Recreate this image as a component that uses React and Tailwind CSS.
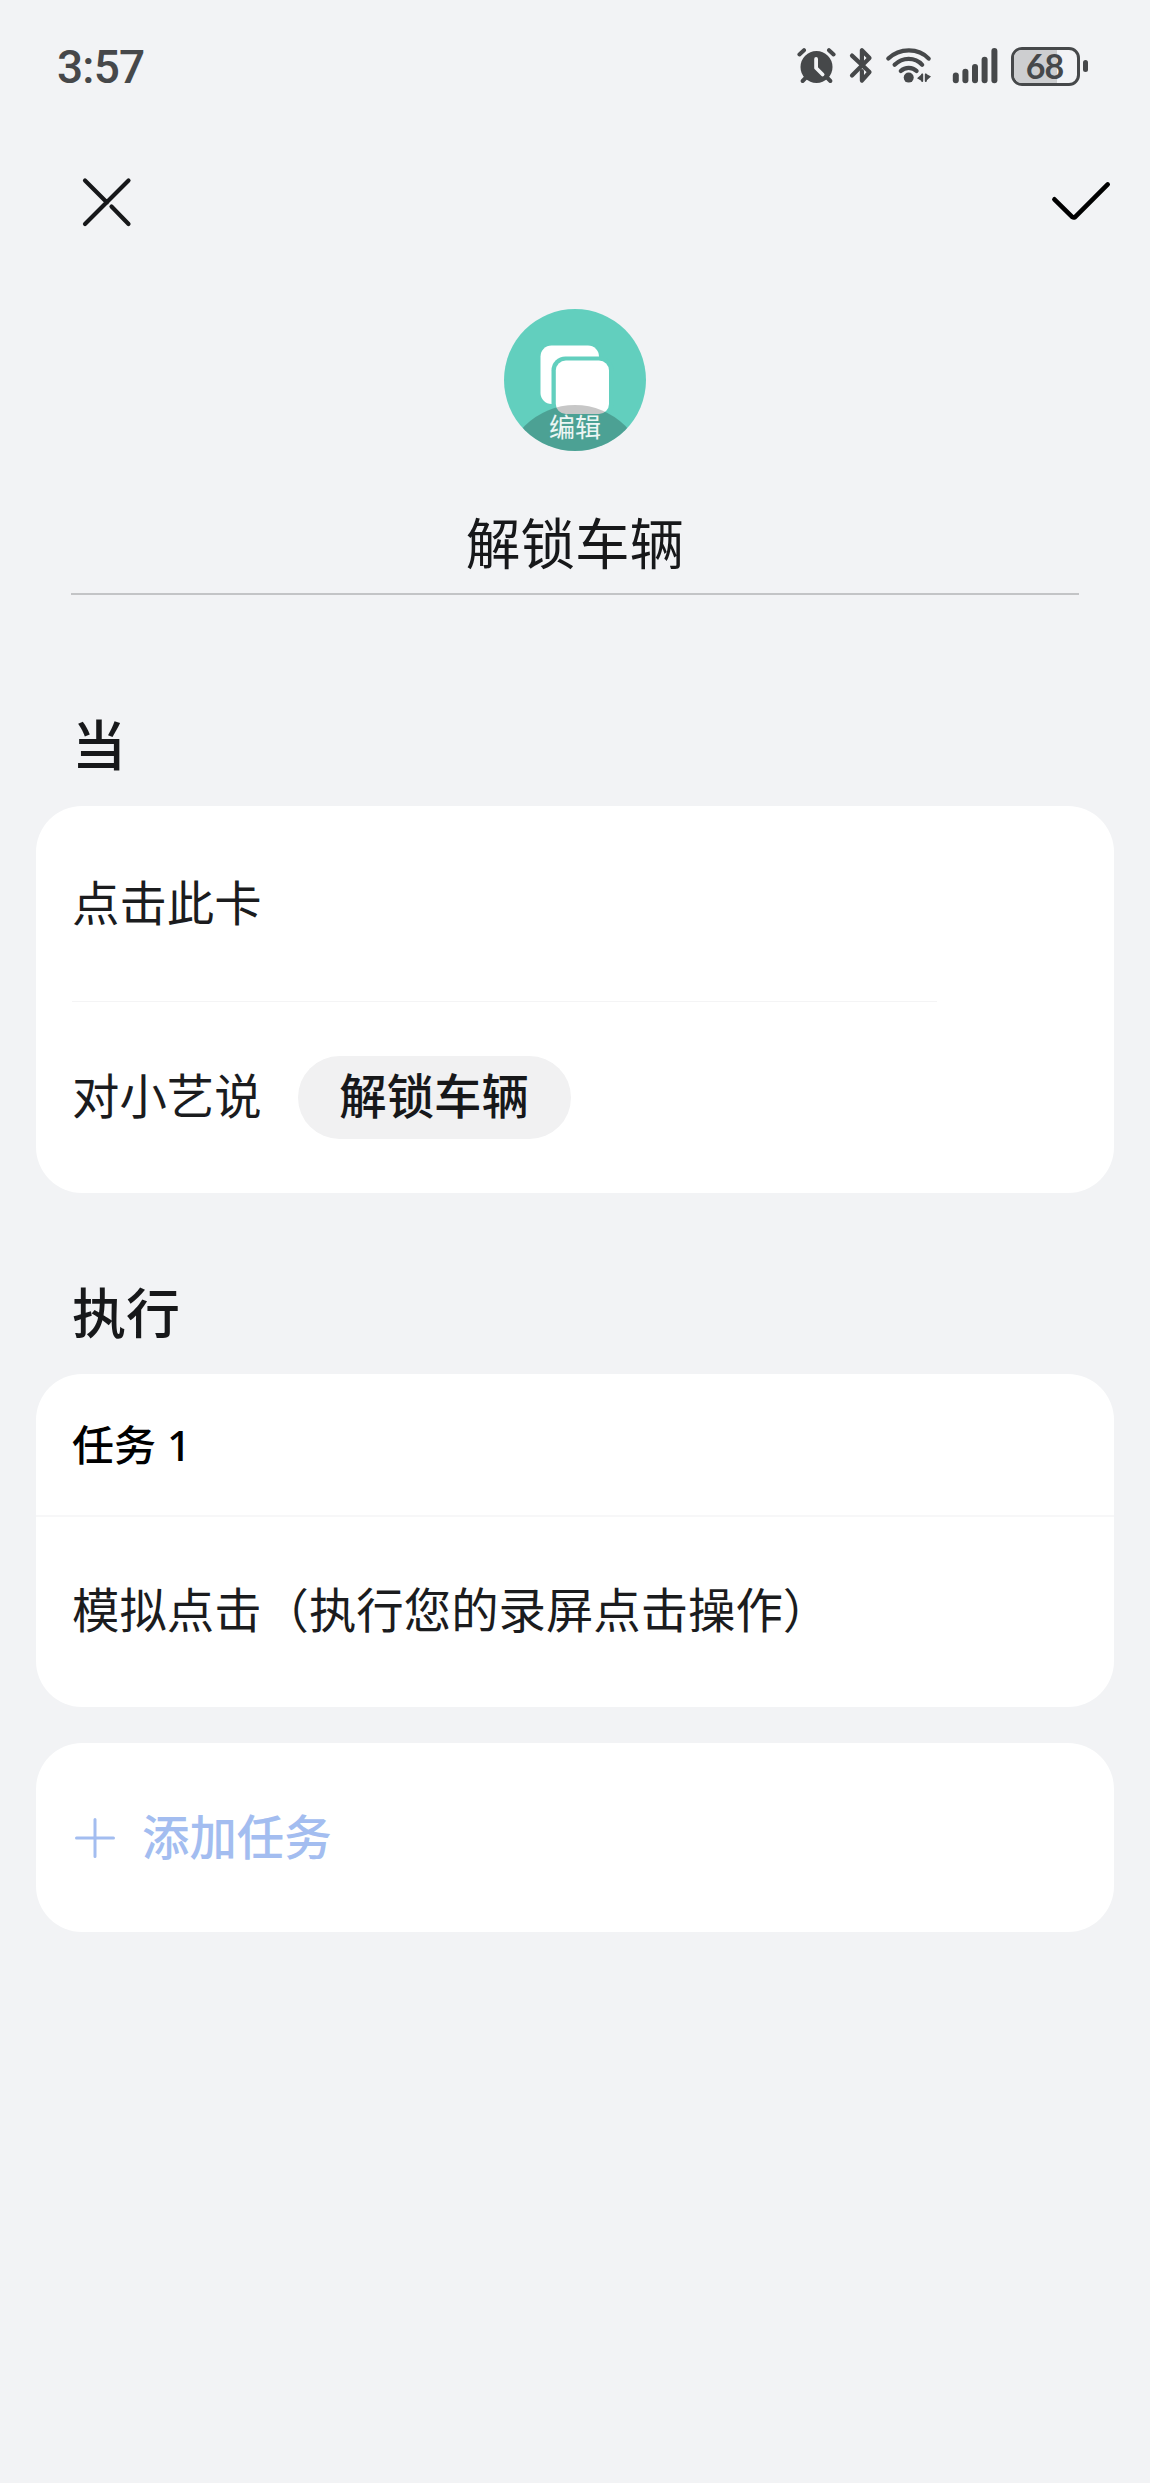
import React from "react";

const INK = "#46484a";

function AlarmIcon() {
  return (
    <svg width="40" height="40" viewBox="0 0 40 40" fill="none" stroke={INK} strokeLinecap="round">
      <circle cx="19.5" cy="21" r="16" fill={INK} stroke="none" />
      <path d="M2.4 8.4 7 4.2M36.6 8.4 32 4.2" strokeWidth="4" />
      <path d="M9.5 31 5.6 35M29.5 31 33.4 35" strokeWidth="4" />
      <path d="M19.1 13v9l6.5 6.5" stroke="#f2f3f5" strokeWidth="3.8" strokeLinejoin="round" />
    </svg>
  );
}

function BluetoothIcon() {
  return (
    <svg width="24" height="40" viewBox="0 0 24 40" fill="none" stroke={INK} strokeWidth="4.2" strokeLinecap="round" strokeLinejoin="round">
      <path d="M3 9.6 20.5 26 12.9 34.6V25" />
      <path d="M3 29.6 20.5 12 12.9 4.2v12" />
    </svg>
  );
}

function WifiIcon() {
  return (
    <svg width="48" height="40" viewBox="0 0 48 40" fill="none" stroke={INK} strokeWidth="4.2" strokeLinecap="round">
      <path d="M3.3 12.6C14.5 1.6 33.5 1.6 43.7 12.6" />
      <path d="M9.6 18.8C17.5 10.8 30 10.8 37.2 18.8" />
      <path d="M15.8 25C20 20.8 27.5 20.8 31.6 25" />
      <circle cx="23.7" cy="31.6" r="5" fill={INK} stroke="none" />
      <path d="M37.5 27.5v8L32 32.2zM40.5 27.5v8l5.5-5z" fill={INK} stroke="none" />
      <path d="M37.2 28.5v6.5M40.8 28.5v6.5" strokeWidth="2" />
    </svg>
  );
}

function SignalIcon() {
  return (
    <svg width="48" height="40" viewBox="0 0 48 40" fill={INK}>
      <rect x="1.8" y="26.6" width="6" height="10.6" rx="3" />
      <rect x="11.4" y="22.8" width="6" height="14.4" rx="3" />
      <rect x="21" y="18" width="6" height="19.2" rx="3" />
      <rect x="30.6" y="10.8" width="6" height="26.4" rx="3" />
      <rect x="40.4" y="2" width="6" height="35.2" rx="3" />
    </svg>
  );
}

function Battery({ level }) {
  return (
    <div className="flex items-center gap-[3px]">
      <div className="relative w-[69px] h-[39px] rounded-[11px] border-[3px] border-[#46484a] overflow-hidden flex items-center justify-center">
        <div className="absolute inset-y-0 left-0 bg-[#cdced0]" style={{ width: `${level}%` }} />
        <span className="relative right-px font-[Lato] font-bold text-[34px] leading-none tracking-[-1px] text-[#46484a]">{level}</span>
      </div>
      <div className="w-[5px] h-[12px] rounded-full bg-[#46484a]" />
    </div>
  );
}

function StatusBar() {
  return (
    <div className="h-[130px] pl-[57px] pr-[62px] flex items-start justify-between">
      <span className="mt-[44px] font-[Roboto] font-medium text-[46px] leading-[46px] tracking-[-0.8px] text-[#46484a]">3:57</span>
      <div className="mt-[46px] flex items-center">
        <AlarmIcon />
        <div className="ml-[12px]"><BluetoothIcon /></div>
        <div className="ml-[12px]"><WifiIcon /></div>
        <div className="ml-[18px] mr-[12px]"><SignalIcon /></div>
        <Battery level={68} />
      </div>
    </div>
  );
}

function Toolbar() {
  return (
    <div className="h-[144px] pt-[46px] pl-[80px] pr-[36px] flex items-start justify-between">
      <button aria-label="关闭">
        <svg width="54" height="52" viewBox="0 0 54 52" fill="none" stroke="#17181a" strokeWidth="4.2" strokeLinecap="round">
          <path d="M5 4.5 27 26.5M48.5 4.5 5 48M31.5 30.5 48.5 48" />
        </svg>
      </button>
      <button aria-label="完成">
        <svg width="64" height="52" viewBox="0 0 64 52" fill="none" stroke="#000" strokeWidth="4.6" strokeLinecap="round" strokeLinejoin="round">
          <path d="M4.4 23.3 22.4 41.1Q23.6 41.8 25 41.1L57.7 8.4" />
        </svg>
      </button>
    </div>
  );
}

function CardAvatar() {
  return (
    <div className="relative w-[142px] h-[142px] rounded-full overflow-hidden bg-[#62cfbe]">
      <svg className="absolute inset-0" width="142" height="142" viewBox="0 0 142 142">
        <rect x="36.5" y="36.5" width="58.5" height="58.5" rx="11" fill="#fff" />
        <rect x="47.5" y="47.5" width="62" height="62" rx="14" fill="#62cfbe" />
        <rect x="51.8" y="51.5" width="53.2" height="53.5" rx="10" fill="#fff" />
        <circle cx="71" cy="167" r="71" fill="#000" fillOpacity="0.22" />
      </svg>
      <span className="absolute inset-x-0 top-[103px] text-center text-[26px] leading-[28px] text-white/90">编辑</span>
    </div>
  );
}

function SectionTitle({ children }) {
  return <h2 className="pl-[36px] text-[54px] leading-[64px] font-medium text-[#17181a]">{children}</h2>;
}

export default function App() {
  return (
    <div className="w-full h-[2483px] bg-[#f2f3f5] font-['Noto_Sans_CJK_SC',sans-serif] text-[#1b1c1e]">
      <StatusBar />
      <Toolbar />

      {/* Icon and name */}
      <div className="mx-[71px] h-[321px] pt-[35px] flex flex-col items-center border-b-2 border-[#c3c4c6] text-[#17181a]">
        <CardAvatar />
        <h1 className="mt-[58px] text-[54.6px] leading-[64px]">解锁车辆</h1>
      </div>

      <main className="px-[36px] pt-[116px]">
        <SectionTitle>当</SectionTitle>
        <section className="mt-[31px] h-[387px] rounded-[46px] bg-white px-[36px]">
          <div className="h-[195px] pb-[6px] flex items-center text-[47.4px] leading-none">点击此卡</div>
          <div className="w-[865px] h-px bg-[#f4f4f5]" />
          <div className="h-[191px] flex items-center text-[47.4px] leading-none">
            <span className="pb-[8px]">对小艺说</span>
            <span className="ml-[36px] w-[273px] h-[83px] pb-[7px] rounded-full bg-[#f1f1f2] flex items-center justify-center font-medium text-[#17181a]">解锁车辆</span>
          </div>
        </section>

        <div className="pt-[86px]">
          <SectionTitle>执行</SectionTitle>
        </div>
        <section className="mt-[31px] h-[333px] rounded-[46px] bg-white">
          <div className="h-[143px] px-[36px] pb-[2px] flex items-center border-b-2 border-[#f7f7f8] text-[42px] leading-none font-medium text-black">
            <span>任务<span className="font-['Noto_Sans']"> 1</span></span>
          </div>
          <div className="h-[190px] px-[36px] pb-[8px] flex items-center text-[47.4px] leading-none">模拟点击（执行您的录屏点击操作）</div>
        </section>

        <button className="mt-[36px] w-full h-[189px] rounded-[46px] bg-white px-[36px] flex items-center text-[47.4px] leading-none font-medium text-[#a3bdf0]">
          <svg width="46" height="46" viewBox="0 0 46 46" stroke="#a3bdf0" strokeWidth="3" strokeLinecap="round">
            <path d="M23 4.5v37M4.5 23h37" />
          </svg>
          <span className="ml-[24px] pb-[5px]">添加任务</span>
        </button>
      </main>
    </div>
  );
}
